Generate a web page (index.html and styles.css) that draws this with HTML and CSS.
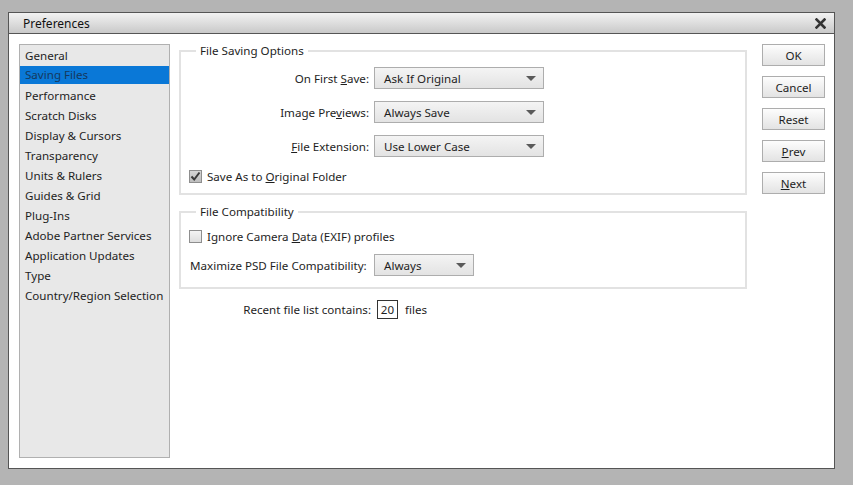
FILE: index.html
```html
<!DOCTYPE html>
<html lang="en">
<head>
    <meta charset="UTF-8">
    <title>Preferences</title>
    <link rel="stylesheet" href="styles.css">
</head>
<body>
    <div class="dialog">
        <div class="title-bar">
            <span class="title">Preferences</span>
            <svg class="close" width="11" height="11" viewBox="0 0 11 11">
                <path d="M1.5 1.5 L9.5 9.5 M9.5 1.5 L1.5 9.5" stroke="#333" stroke-width="2.6" stroke-linecap="square"/>
            </svg>
        </div>

        <div class="dialog-body">
            <ul class="nav-list">
                <li>General</li>
                <li class="active">Saving Files</li>
                <li>Performance</li>
                <li>Scratch Disks</li>
                <li>Display &amp; Cursors</li>
                <li>Transparency</li>
                <li>Units &amp; Rulers</li>
                <li>Guides &amp; Grid</li>
                <li>Plug-Ins</li>
                <li>Adobe Partner Services</li>
                <li>Application Updates</li>
                <li>Type</li>
                <li>Country/Region Selection</li>
            </ul>

            <div class="panel">
                <fieldset class="group saving">
                    <legend>File Saving Options</legend>
                    <div class="row">
                        <label class="field-label">On First <u>S</u>ave:</label>
                        <div class="select wide">Ask If Original<span class="arrow"></span></div>
                    </div>
                    <div class="row">
                        <label class="field-label">Image Pre<u>v</u>iews:</label>
                        <div class="select wide">Always Save<span class="arrow"></span></div>
                    </div>
                    <div class="row">
                        <label class="field-label"><u>F</u>ile Extension:</label>
                        <div class="select wide">Use Lower Case<span class="arrow"></span></div>
                    </div>
                    <div class="check-row first">
                        <span class="checkbox checked">
                            <svg width="11" height="11" viewBox="0 0 11 11"><path d="M1.5 5.5 L4.2 8.5 L9.5 1.5" fill="none" stroke="#3a3a3a" stroke-width="2"/></svg>
                        </span>
                        <span>Save As to <u>O</u>riginal Folder</span>
                    </div>
                </fieldset>

                <fieldset class="group compat">
                    <legend>File Compatibility</legend>
                    <div class="check-row">
                        <span class="checkbox"></span>
                        <span>Ignore Camera <u>D</u>ata (EXIF) profiles</span>
                    </div>
                    <div class="row">
                        <label class="field-label left">Maximize PSD File Compatibility:</label>
                        <div class="select narrow">Always<span class="arrow"></span></div>
                    </div>
                </fieldset>

                <div class="recent">
                    <span class="recent-label">Recent file list contains:</span>
                    <span class="num-box">20</span>
                    <span>files</span>
                </div>
            </div>

            <div class="buttons">
                <button class="btn">OK</button>
                <button class="btn">Cancel</button>
                <button class="btn">Reset</button>
                <button class="btn"><u>P</u>rev</button>
                <button class="btn"><u>N</u>ext</button>
            </div>
        </div>
    </div>
</body>
</html>
```

FILE: styles.css
```css
:root {
    --bg-color: #b4b4b4;
    --text-color: #1e1e1e;
    --line-color: #e2e2e2;
    --control-border: #adadad;
    --select-color: #0a78d7;
}

* {
    box-sizing: border-box;
}

body {
    margin: 0;
    padding: 12px 0 0 8px;
    background-color: var(--bg-color);
    font-family: 'Noto Sans', 'DejaVu Sans', sans-serif;
    font-size: 11.6px;
    color: var(--text-color);
    height: 485px;
    overflow: hidden;
}

.dialog {
    width: 827px;
    height: 457px;
    border: 1px solid #555555;
    background-color: #ffffff;
    display: flex;
    flex-direction: column;
}

.title-bar {
    height: 21px;
    flex: none;
    display: flex;
    align-items: center;
    justify-content: space-between;
    padding: 0 8px 0 14px;
    background: linear-gradient(#f2f2f2, #c9c9c9);
    border-bottom: 1px solid #555555;
}

.title {
    font-size: 12px;
    color: #111111;
}

.dialog-body {
    flex: 1;
    display: flex;
    padding: 10px;
}

.nav-list {
    list-style: none;
    margin: 0;
    padding: 1px 0 0;
    width: 151px;
    flex: none;
    background-color: #e8e8e8;
    border: 1px solid #b0b0b0;
}

.nav-list li {
    height: 20px;
    line-height: 20px;
    padding-left: 5px;
    white-space: nowrap;
}

.nav-list li.active {
    background-color: var(--select-color);
    color: #15385e;
    height: 18px;
    line-height: 18px;
    margin: 0 0 2px;
}

.panel {
    width: 568px;
    flex: none;
    margin-left: 9px;
}

.group {
    margin: 0;
    padding: 0 8px;
    border: 2px solid var(--line-color);
}

.group legend {
    margin-left: 7px;
    padding: 0 4px;
    line-height: 14px;
}

.saving {
    height: 151px;
    padding-top: 9px;
}

.compat {
    margin-top: 10px;
    height: 84px;
    padding-top: 9px;
}

.row {
    display: flex;
    align-items: center;
    margin-bottom: 12px;
}

.compat .row {
    margin-top: 10px;
}

.field-label {
    width: 185px;
    text-align: right;
    padding-right: 5px;
    white-space: nowrap;
}

.field-label.left {
    text-align: left;
    padding-left: 1px;
}

.select {
    position: relative;
    height: 22px;
    line-height: 21px;
    padding-left: 9px;
    border: 1px solid var(--control-border);
    background: linear-gradient(#f4f4f4, #e3e3e3);
}

.select.wide {
    width: 170px;
}

.select.narrow {
    width: 100px;
}

.arrow {
    position: absolute;
    right: 7px;
    top: 8px;
    width: 0;
    height: 0;
    border-left: 5px solid transparent;
    border-right: 5px solid transparent;
    border-top: 5px solid #5a5a5a;
}

.check-row {
    display: flex;
    align-items: center;
    height: 16px;
}

.check-row.first {
    margin-top: -1px;
}

.checkbox {
    width: 13px;
    height: 13px;
    margin-right: 5px;
    border: 1px solid #8e8e8e;
    background: linear-gradient(#f4f4f4, #dedede);
    display: flex;
    align-items: center;
    justify-content: center;
}

.checkbox.checked {
    background: linear-gradient(#d6d6d6, #bdbdbd);
}

.recent {
    display: flex;
    align-items: center;
    height: 19px;
    margin-top: 11px;
}

.recent-label {
    width: 192px;
    text-align: right;
    white-space: nowrap;
}

.num-box {
    width: 21px;
    height: 19px;
    line-height: 18px;
    margin: 0 7px 0 6px;
    border: 1px solid #333333;
    text-align: center;
}

.buttons {
    margin-left: 15px;
    display: flex;
    flex-direction: column;
    gap: 10px;
}

.btn {
    width: 63px;
    height: 22px;
    padding: 0;
    font-family: inherit;
    font-size: 11.6px;
    color: var(--text-color);
    border: 1px solid var(--control-border);
    background: linear-gradient(#fdfdfd, #e3e3e3);
    cursor: pointer;
}
```
